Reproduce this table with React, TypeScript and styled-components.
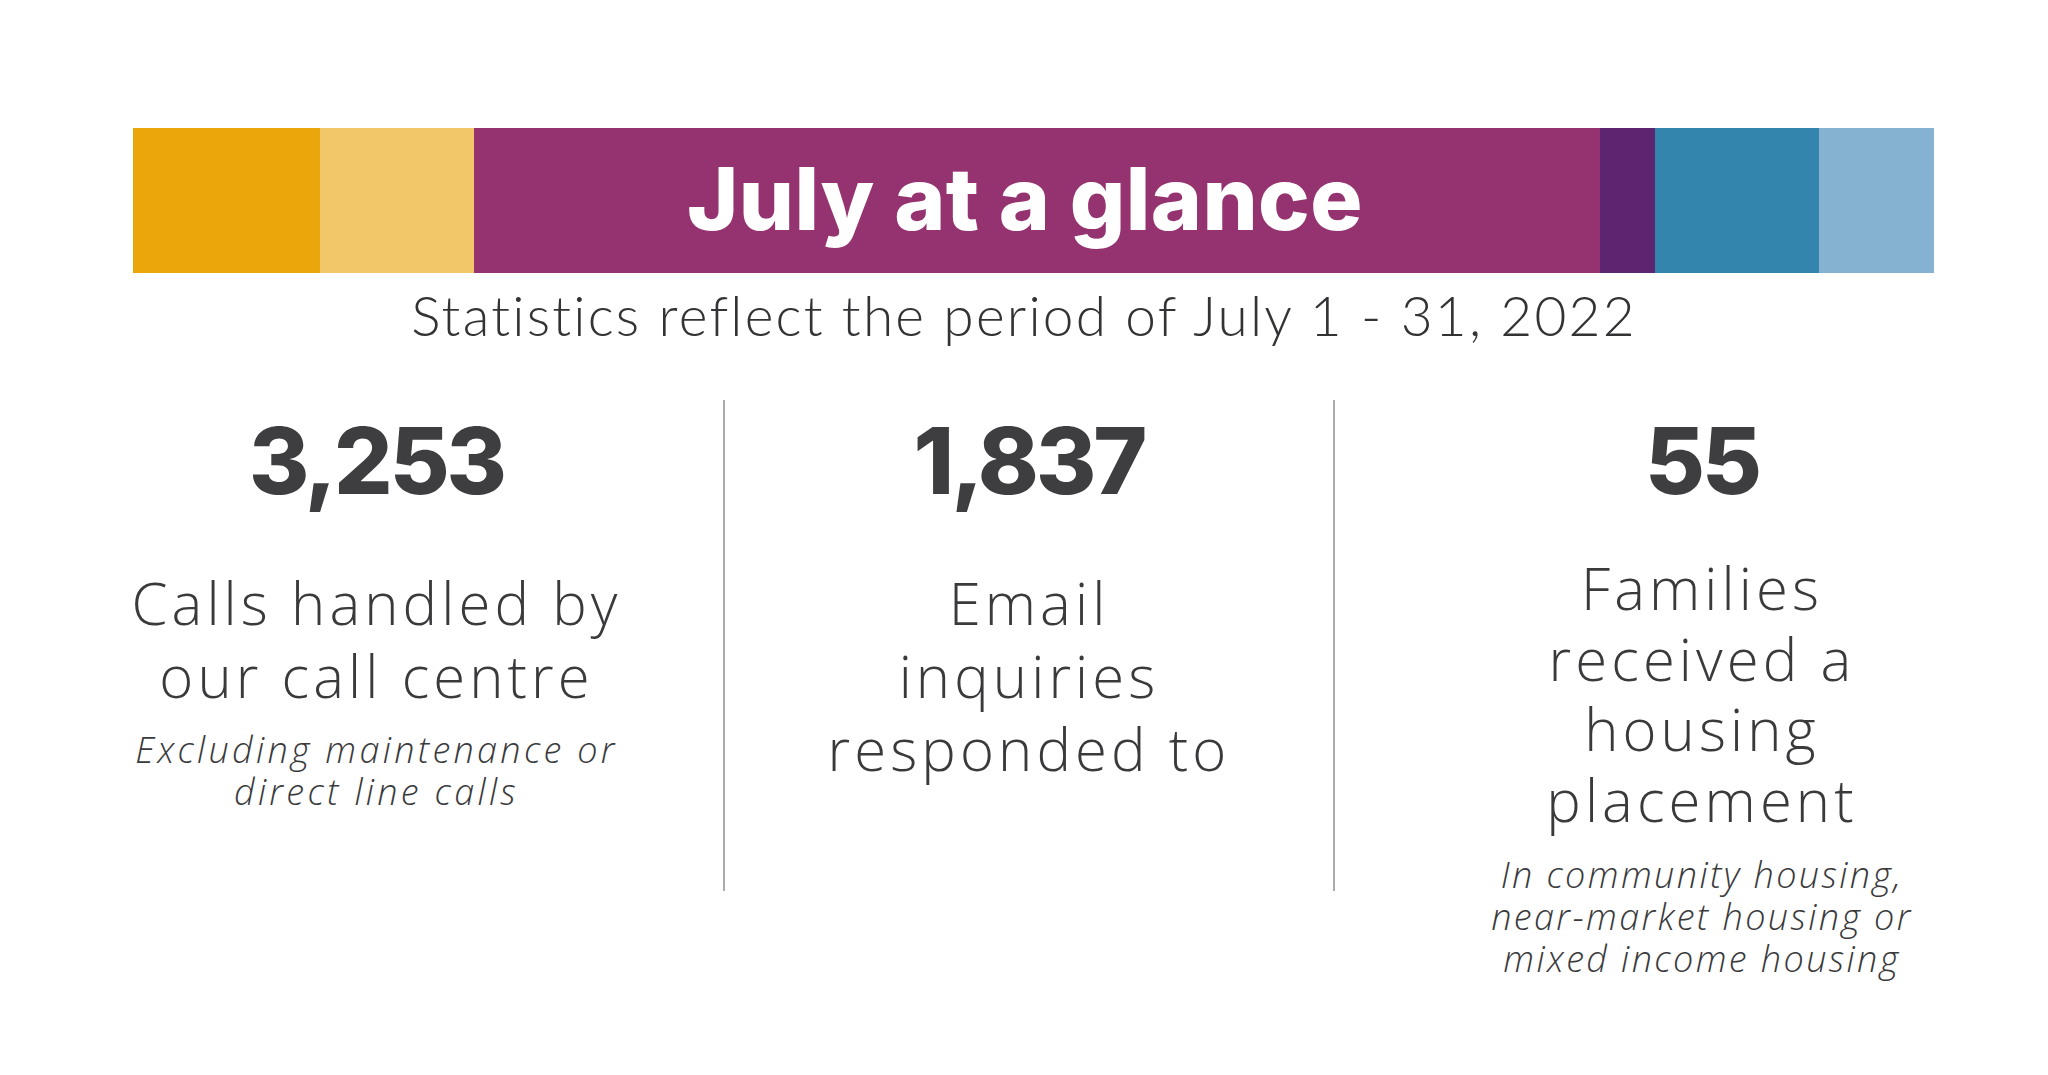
import React from "react";
import styled, { createGlobalStyle } from "styled-components";

const GlobalStyle = createGlobalStyle`
  html, body {
    margin: 0;
    padding: 0;
    background: #ffffff;
  }
  body {
    width: 2048px;
    height: 1075px;
    overflow: hidden;
    font-family: "Open Sans", "Liberation Sans", sans-serif;
    color: #3d3d3f;
  }
`;

const Page = styled.main`
  width: 2048px;
  height: 1075px;
  display: flex;
  flex-direction: column;
  padding-top: 128px;
  box-sizing: border-box;
`;

const Banner = styled.header`
  margin-left: 133px;
  width: 1801px;
  height: 145px;
  display: flex;
`;

const Swatch = styled.div<{ $w: number; $c: string }>`
  flex: 0 0 ${(p) => p.$w}px;
  background: ${(p) => p.$c};
`;

const TitleBlock = styled.div`
  flex: 0 0 1126px;
  background: #953370;
  display: flex;
  align-items: center;
  justify-content: center;
  padding-right: 24px;
  box-sizing: border-box;
`;

const Title = styled.h1`
  margin: 0;
  font-family: Inter, "Liberation Sans", sans-serif;
  font-weight: 800;
  font-size: 87px;
  line-height: 1;
  letter-spacing: 0.4px;
  color: #ffffff;
  white-space: nowrap;
  transform: translateY(-2px);
`;

const Subtitle = styled.p`
  margin: 9px 0 0 0;
  padding-right: 0;
  text-align: center;
  font-family: Lato, "Liberation Sans", sans-serif;
  font-weight: 300;
  font-size: 55px;
  line-height: 66px;
  letter-spacing: 2.2px;
  color: #333335;
  white-space: nowrap;
`;

const Stats = styled.section`
  margin-top: 52px;
  padding-left: 30px;
  display: grid;
  grid-template-columns: 693px 2px 608px 2px 713px;
  align-items: start;
`;

const Stat = styled.div<{ $shift?: number }>`
  display: flex;
  flex-direction: column;
  align-items: center;
  text-align: center;
  padding-top: 15px;
  padding-left: ${(p) => p.$shift ?? 0}px;
  box-sizing: border-box;
`;

const Divider = styled.div`
  width: 2px;
  height: 491px;
  background: #ababab;
`;

const Figure = styled.div`
  font-family: Inter, "Liberation Sans", sans-serif;
  font-weight: 800;
  font-size: 92px;
  line-height: 92px;
  letter-spacing: -3px;
  color: #3e3e40;
`;

const Label = styled.div<{ $lh: number; $gap: number }>`
  margin-top: ${(p) => p.$gap}px;
  font-family: "Open Sans", "Liberation Sans", sans-serif;
  font-weight: 350;
  font-size: 58px;
  line-height: ${(p) => p.$lh}px;
  letter-spacing: 4.1px;
  color: #3a3a3c;
`;

const Note = styled.div<{ $gap: number; $ls: number }>`
  margin-top: ${(p) => p.$gap}px;
  font-family: "Open Sans", "Liberation Sans", sans-serif;
  font-style: italic;
  font-weight: 350;
  font-size: 36px;
  line-height: 42px;
  letter-spacing: ${(p) => p.$ls}px;
  color: #3a3a3c;
`;

const Line = styled.span`
  display: block;
  white-space: nowrap;
`;

const swatchesLeft = [
  { w: 187, c: "#EBA60C" },
  { w: 154, c: "#F2C769" },
];
const swatchesRight = [
  { w: 55, c: "#5D256F" },
  { w: 164, c: "#3385AE" },
  { w: 115, c: "#86B2D2" },
];

export default function App() {
  return (
    <>
      <GlobalStyle />
      <Page>
        <Banner>
          {swatchesLeft.map((s) => (
            <Swatch key={s.c} $w={s.w} $c={s.c} />
          ))}
          <TitleBlock>
            <Title>July at a glance</Title>
          </TitleBlock>
          {swatchesRight.map((s) => (
            <Swatch key={s.c} $w={s.w} $c={s.c} />
          ))}
        </Banner>
        <Subtitle>Statistics reflect the period of July 1 - 31, 2022</Subtitle>
        <Stats>
          <Stat>
            <Figure>3,253</Figure>
            <Label $lh={73} $gap={59}>
              <Line>Calls handled by</Line>
              <Line>our call centre</Line>
            </Label>
            <Note $gap={17} $ls={3.3}>
              <Line>Excluding maintenance or</Line>
              <Line>direct line calls</Line>
            </Note>
          </Stat>
          <Divider />
          <Stat>
            <Figure>1,837</Figure>
            <Label $lh={73} $gap={59}>
              <Line>Email</Line>
              <Line>inquiries</Line>
              <Line>responded to</Line>
            </Label>
          </Stat>
          <Divider />
          <Stat $shift={21}>
            <Figure>55</Figure>
            <Label $lh={70.5} $gap={46}>
              <Line>Families</Line>
              <Line>received a</Line>
              <Line>housing</Line>
              <Line>placement</Line>
            </Label>
            <Note $gap={19} $ls={2.4}>
              <Line>In community housing,</Line>
              <Line>near-market housing or</Line>
              <Line>mixed income housing</Line>
            </Note>
          </Stat>
        </Stats>
      </Page>
    </>
  );
}
